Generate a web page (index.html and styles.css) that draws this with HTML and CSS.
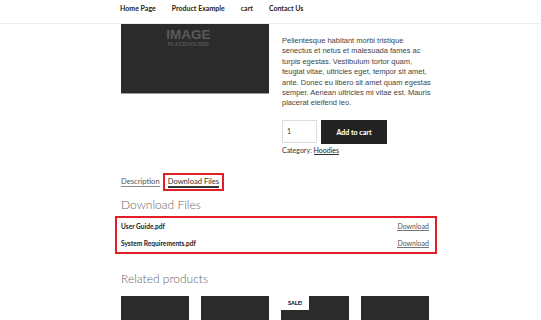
FILE: index.html
```html
<!DOCTYPE html>
<html lang="en">
<head>
    <meta charset="UTF-8">
    <meta name="viewport" content="width=device-width, initial-scale=1.0">
    <title>Product Example</title>
    <link rel="stylesheet" href="styles.css">
</head>
<body>
    <header class="navbar">
        <nav class="menu">
            <a href="#">Home Page</a>
            <a href="#">Product Example</a>
            <a href="#">cart</a>
            <a href="#">Contact Us</a>
        </nav>
    </header>

    <main class="site">
        <section class="product">
            <div class="gallery">
                <div class="placeholder">
                    <span class="ph-big">IMAGE</span>
                    <span class="ph-small">PLACEHOLDER</span>
                </div>
            </div>
            <div class="summary">
                <p>Pellentesque habitant morbi tristique senectus et netus et malesuada fames ac turpis egestas. Vestibulum tortor quam, feugiat vitae, ultricies eget, tempor sit amet, ante. Donec eu libero sit amet quam egestas semper. Aenean ultricies mi vitae est. Mauris placerat eleifend leo.</p>
                <form class="cart">
                    <input class="qty" type="text" value="1">
                    <button type="button">Add to cart</button>
                </form>
                <div class="meta">Category: <a href="#">Hoodies</a></div>
            </div>
        </section>

        <ul class="tabs">
            <li><a href="#">Description</a></li>
            <li class="active"><a href="#">Download Files</a></li>
        </ul>

        <h2>Download Files</h2>
        <table class="downloads">
            <tr>
                <td class="file">User Guide.pdf</td>
                <td class="link"><a href="#">Download</a></td>
            </tr>
            <tr>
                <td class="file">System Requirements.pdf</td>
                <td class="link"><a href="#">Download</a></td>
            </tr>
        </table>

        <h2 class="related-title">Related products</h2>
        <ul class="related">
            <li class="thumb"></li>
            <li class="thumb"></li>
            <li class="thumb"><span class="sale">SALE!</span></li>
            <li class="thumb"></li>
        </ul>
    </main>
</body>
</html>
```

FILE: styles.css
```css
body {
    margin: 0;
    font-family: Lato, "Liberation Sans", sans-serif;
    color: #333;
    background: #fff;
    overflow: hidden;
}
a {
    color: #222;
    text-decoration: none;
}
.navbar {
    height: 23px;
    border-bottom: 1px solid #eee;
}
.menu {
    display: flex;
    gap: 16px;
    padding-left: 120px;
    line-height: 17px;
}
.menu a {
    font-size: 7px;
    font-weight: bold;
}
.site {
    width: 310px;
    margin-left: 121px;
}
.product {
    display: flex;
    gap: 13px;
}
.gallery {
    width: 148px;
    flex-shrink: 0;
}
.placeholder {
    height: 70px;
    box-sizing: border-box;
    background: #2b2b2b;
    border-bottom: 1px solid #9a9a9a;
    display: flex;
    flex-direction: column;
    align-items: center;
    padding: 5px 13px 0 0;
}
.ph-big {
    font-family: "Liberation Sans", sans-serif;
    font-weight: bold;
    font-size: 13.5px;
    line-height: 12px;
    color: #5a5a5a;
}
.ph-small {
    font-family: "Liberation Sans", sans-serif;
    font-weight: bold;
    font-size: 5.4px;
    line-height: 7px;
    color: #565656;
}
.summary {
    flex: 1;
    padding-top: 12px;
}
.summary p {
    margin: 0;
    font-family: "Liberation Sans", sans-serif;
    font-size: 7.5px;
    line-height: 10.4px;
    color: #444;
}
.cart {
    display: flex;
    gap: 4px;
    margin-top: 11px;
}
.qty {
    width: 35px;
    height: 23px;
    box-sizing: border-box;
    border: 1px solid #ddd;
    padding: 0 4px;
    font-family: inherit;
    font-size: 7px;
    color: #333;
}
.cart button {
    width: 66px;
    height: 24px;
    background: #222;
    color: #fff;
    border: none;
    font-family: inherit;
    font-weight: 900;
    font-size: 7px;
}
.meta {
    font-size: 7px;
    line-height: 10.4px;
    margin-top: 1px;
    color: #333;
}
.meta a {
    border-bottom: 1px solid #333;
}
.tabs {
    list-style: none;
    display: flex;
    gap: 3px;
    margin: 18px 0 0;
    padding: 0;
}
.tabs li {
    padding: 1px 3px 2px;
    border: 2px solid transparent;
    font-size: 7.6px;
    line-height: 11px;
}
.tabs li:first-child {
    padding-left: 0;
    padding-right: 0;
    border-left: 0;
    border-right: 0;
}
.tabs a {
    color: #555;
    border-bottom: 1px solid #888;
}
.tabs .active {
    border-color: #e21f26;
}
.tabs .active a {
    color: #333;
    border-bottom: 2px solid #333;
}
h2 {
    font-size: 12px;
    font-weight: 300;
    color: #666;
    margin: 5px 0 0;
    line-height: 17px;
}
.downloads {
    width: 322px;
    margin: 3px 0 0 -6px;
    border: 2px solid #e21f26;
    border-collapse: separate;
    border-spacing: 0;
    padding: 0 4px;
}
.downloads td {
    font-size: 7px;
    line-height: 17px;
    padding: 0;
}
.downloads .file {
    font-size: 6.6px;
    font-weight: bold;
    color: #222;
}
.downloads .link {
    text-align: right;
    padding-right: 2px;
}
.downloads .link a {
    color: #555;
    border-bottom: 1px solid #777;
}
.related-title {
    margin-top: 16px;
}
.related {
    list-style: none;
    display: flex;
    gap: 12px;
    margin: 9px 0 0;
    padding: 0;
}
.thumb {
    position: relative;
    width: 68px;
    height: 40px;
    background: #2b2b2b;
}
.sale {
    position: absolute;
    top: 0;
    left: 0;
    background: #fff;
    color: #222;
    font-size: 5.5px;
    font-weight: 900;
    padding: 4px 7px;
}
```
